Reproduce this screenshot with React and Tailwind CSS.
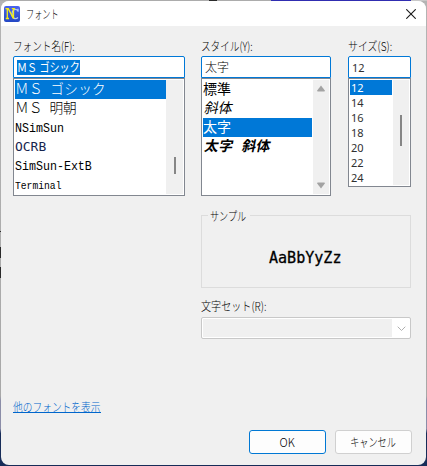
const FONTS = [
  { name: "ＭＳ ゴシック", style: "font-['Noto_Sans_CJK_JP',sans-serif] text-[14px] font-light tracking-[.4px] [word-spacing:4px] relative -top-[2px]", selected: true, scale: "scale-x-[.97]" },
  { name: "ＭＳ 明朝", style: "font-['Noto_Sans_CJK_JP',sans-serif] text-[14px] font-light [word-spacing:4px] relative -top-[2px]", scale: "scale-x-[.98]" },
  { name: "NSimSun", style: "font-['Liberation_Mono',monospace] text-[12px] relative -top-[2px]", scale: "scale-x-[.97]" },
  { name: "OCRB", style: "font-['DejaVu_Sans_Mono',monospace] text-[12px] text-[#16244e] relative -top-[2px]", scale: "scale-x-[1.08]" },
  { name: "SimSun-ExtB", style: "font-['Liberation_Mono',monospace] text-[12px] relative -top-[2px]", scale: "scale-x-[.97]" },
  { name: "Terminal", style: "font-['Liberation_Mono',monospace] text-[11px] relative -top-[2px]", scale: "scale-x-[.88]" },
];

const STYLES = [
  { name: "標準", style: "" },
  { name: "斜体", style: "-skew-x-12 ml-0.5" },
  { name: "太字", style: "", selected: true },
  { name: "太字 斜体", style: "-skew-x-12 ml-0.5 font-bold [word-spacing:5px] tracking-[.4px]" },
];

const SIZES = [12, 14, 16, 18, 20, 22, 24];

function Label({ children, scale = "scale-x-[.8]", className = "" }) {
  return (
    <span className={`block origin-left text-[12px] font-light whitespace-nowrap ${scale} ${className}`}>
      {children}
    </span>
  );
}

function Field({ children }) {
  return (
    <div className="flex h-[22px] items-center rounded-t-[2px] border border-[#0078d7] bg-white pl-[3px]">
      {children}
    </div>
  );
}

function AppIcon() {
  return (
    <svg width="16" height="16" viewBox="0 0 16 16">
      <defs>
        <linearGradient id="icon" x1="0" y1="0" x2="0" y2="1">
          <stop offset="0" stopColor="#4a64ee" />
          <stop offset="1" stopColor="#2448c4" />
        </linearGradient>
      </defs>
      <rect width="16" height="16" rx="2" fill="url(#icon)" />
      <path d="M14 5.8V2.8M14 4.8C11.5 2 8 3.8 8 7.8S11 14 14 11.5" fill="none" stroke="#b4c8f2" strokeWidth="1.3" />
      <path d="M1.5 2.7H4.3L9.5 12.6V2.7M7.8 2.7H11M3.3 2.7V12.5M1.8 12.5H5" fill="none" stroke="#f4ed16" strokeWidth="1.3" />
    </svg>
  );
}

export default function App() {
  return (
    <div className="h-[466px] w-[427px] overflow-hidden bg-[linear-gradient(#b4b4b4_0%,#a8a8a8_85%,#8b8da8_86%,#8b8da8_92%,#172c58_93%)] font-['Noto_Sans_CJK_JP',sans-serif] text-black">
      <div className="flex h-px">
        <div className="w-[209px] bg-[#acacac]" />
        <div className="w-[8px] bg-[#2a2a2a]" />
        <div className="w-[54px] bg-[#acacac]" />
        <div className="w-[140px] bg-[#302db1]" />
        <div className="flex-1 bg-[#c8c8c8]" />
      </div>
      <div className="flex">
        <div className="w-px pt-[230px]">
          <div className="h-px bg-[#2a2a2a]" />
          <div className="mt-[15px] h-[11px] bg-[#2a2a2a]" />
          <div className="mt-[9px] h-[11px] bg-[#2a2a2a]" />
        </div>
        <div className="flex h-[464px] w-[425px] flex-col overflow-hidden rounded-[8px] bg-[#f0f0f0]">
          <header className="flex h-[25px] shrink-0 items-center bg-white pl-[3px]">
            <AppIcon />
            <span className="ml-[6px] origin-left scale-x-[.68] text-[12px] font-light">フォント</span>
            <svg className="mr-[10px] ml-auto" width="10" height="10" viewBox="0 0 10 10">
              <path d="M.3.3 9.7 9.7M9.7.3.3 9.7" stroke="#1a1a1a" strokeWidth="1.1" />
            </svg>
          </header>

          <main className="flex flex-1 flex-col pl-[12px] leading-none">
            <div className="flex items-start pt-[13px]">
              <div className="w-[172px]">
                <Label className="h-[17px] leading-[14px]">フォント名(F):</Label>
                <Field>
                  <span className="h-[15px] w-[63px] bg-[#0078d7] text-[12px] leading-[14px] whitespace-nowrap text-white">
                    <span className="inline-block origin-left scale-x-[.84]">ＭＳ ゴシック</span>
                  </span>
                </Field>
                <div className="flex h-[118px] border border-[#828790] bg-white p-px">
                  <div className="w-[151px]">
                    {FONTS.map((f) => (
                      <div key={f.name} className={`h-[19px] leading-[18px] whitespace-nowrap ${f.selected ? "bg-[#0078d7] text-white" : ""}`}>
                        <span className={`inline-block origin-left leading-[18px] ${f.style} ${f.scale}`}>{f.name}</span>
                      </div>
                    ))}
                  </div>
                  <div className="flex-1 bg-[#f0f0f0] pt-[77px] pl-[8px]">
                    <div className="h-[17px] w-[2px] bg-[#868686]" />
                  </div>
                </div>
              </div>

              <div className="ml-[16px] w-[130px]">
                <Label className="h-[17px] leading-[14px]">スタイル(Y):</Label>
                <Field>
                  <span className="text-[12px] leading-[14px] font-light">太字</span>
                </Field>
                <div className="flex h-[118px] border border-[#828790] bg-white p-px">
                  <div className="w-[109px]">
                    {STYLES.map((s) => (
                      <div key={s.name} className={`h-[19px] text-[14px] leading-[17px] whitespace-nowrap ${s.selected ? "bg-[#0078d7] text-white" : ""}`}>
                        <span className={`inline-block ${s.style}`}>{s.name}</span>
                      </div>
                    ))}
                  </div>
                  <div className="ml-px flex flex-1 flex-col items-center justify-between bg-[#f0f0f0] py-[5px]">
                    <svg width="8" height="7" viewBox="0 0 8 7"><path d="M4 .5 8 5.8Q8 6.5 7 6.5H1Q0 6.5 0 5.8Z" fill="#a3a3a3" /></svg>
                    <svg width="8" height="7" viewBox="0 0 8 7"><path d="M4 6.5 8 1.2Q8 .5 7 .5H1Q0 .5 0 1.2Z" fill="#a3a3a3" /></svg>
                  </div>
                </div>
              </div>

              <div className="ml-[17px] w-[63px]">
                <Label scale="scale-x-[.83]" className="h-[17px] leading-[14px]">サイズ(S):</Label>
                <Field>
                  <span className="font-['Noto_Sans',sans-serif] text-[11px] text-[#303030]">12</span>
                </Field>
                <div className="flex h-[109px] border border-[#828790] bg-white p-px">
                  <div className="w-[42px]">
                    {SIZES.map((n) => (
                      <div key={n} className={`h-[15px] pl-px font-['Noto_Sans',sans-serif] text-[11px] leading-[16px] ${n === 12 ? "bg-[#0078d7] text-white" : "text-[#303030]"}`}>
                        {n}
                      </div>
                    ))}
                  </div>
                  <div className="ml-px flex-1 bg-[#f0f0f0] pt-[35px] pl-[7px]">
                    <div className="h-[31px] w-[2px] bg-[#868686]" />
                  </div>
                </div>
              </div>
            </div>

            <div className="mt-[13px] ml-[188px] w-[210px]">
              <fieldset className="h-[79px] border border-[#dcdcdc]">
                <legend className="ml-[6px] h-[13px] w-[42px] pl-[2px]">
                  <Label scale="scale-x-[.76]" className="leading-[14px]">サンプル</Label>
                </legend>
                <div className="flex h-[58px] items-center pt-[13px] pl-[67px]">
                  <span className="origin-left scale-x-[.94] font-['DejaVu_Sans_Mono',monospace] text-[16px] [-webkit-text-stroke:.3px_black]">AaBbYyZz</span>
                </div>
              </fieldset>
              <Label scale="scale-x-[.84]" className="mt-[11px] h-[18px] leading-[14px]">文字セット(R):</Label>
              <div className="flex h-[22px] rounded-[2px] border border-[#c8c8c8] bg-white p-px">
                <div className="w-[189px] bg-[#f0f0f0]" />
                <svg className="mt-[7px] ml-[5px]" width="9" height="6" viewBox="0 0 9 6">
                  <path d="m.7.7 3.8 3.8L8.3.7" fill="none" stroke="#b0b0b0" />
                </svg>
              </div>
            </div>

            <a className="mt-[61px] block h-[13px] w-[88px] border-b border-[#0066cc] whitespace-nowrap text-[#0066cc]">
              <Label scale="scale-x-[.81]" className="leading-[13px]">他のフォントを表示</Label>
            </a>

            <div className="mt-[17px] ml-[236px] flex gap-[9px]">
              <button className="flex h-[24px] w-[77px] items-center justify-center rounded-[3px] border border-[#0078d4] bg-[#fdfdfd] text-[12px] font-light">
                <span className="scale-x-[.94]">OK</span>
              </button>
              <button className="flex h-[24px] w-[77px] items-center justify-center rounded-[3px] border border-[#d0d0d0] bg-[#fdfdfd] text-[12px] font-light">
                <span className="scale-x-[.76] whitespace-nowrap">キャンセル</span>
              </button>
            </div>
          </main>
        </div>
      </div>
    </div>
  );
}
